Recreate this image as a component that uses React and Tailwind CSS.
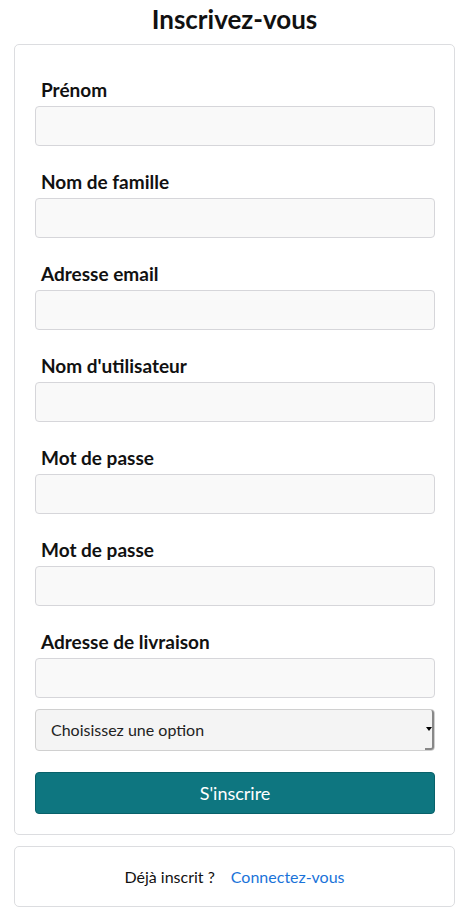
const champs = [
  'Prénom',
  'Nom de famille',
  'Adresse email',
  "Nom d'utilisateur",
  'Mot de passe',
  'Mot de passe',
  'Adresse de livraison',
];

function Champ({ label }) {
  return (
    <div className="mt-6 first:mt-3">
      <label className="block pl-[6px] mb-1 text-[19px] leading-6 font-bold text-[#111]">{label}</label>
      <input className="block w-full h-10 bg-[#f9f9f9] border border-[#d6d6da] rounded-[4px] outline-none" />
    </div>
  );
}

export default function App() {
  return (
    <div className="min-h-screen bg-white font-['Lato',sans-serif] px-[14px]">
      <h1 className="text-center text-[26px] font-bold leading-9 text-[#111] h-11 flex items-center justify-center pb-[6px]">Inscrivez-vous</h1>
      <div className="border border-[#dcdde0] rounded-[5px] pl-5 pr-[19px] pt-[21px] pb-5">
        {champs.map((c, i) => (
          <Champ key={i} label={c} />
        ))}
        <div className="mt-[11px] h-[42px] bg-[#f4f4f4] border border-[#d0d0d0] rounded-[4px] flex items-center relative">
          <span className="pl-[15px] text-[16px] text-[#222]">Choisissez une option</span>
          <div className="absolute right-0 top-0 bottom-0 w-[9px] border-r-2 border-b-2 border-[#888] rounded-r-[3px] flex items-center justify-center">
            <div className="w-0 h-0 border-l-[3px] border-r-[3px] border-t-[4px] border-l-transparent border-r-transparent border-t-black" />
          </div>
        </div>
        <button className="mt-[21px] w-full h-[42px] bg-[#0e7680] border border-[#08616a] rounded-[4px] text-white text-[18px]">S'inscrire</button>
      </div>
      <div className="mt-[11px] border border-[#dcdde0] rounded-[5px] h-[61px] flex items-center justify-center text-[16px]">
        <span className="text-[#111]">Déjà inscrit ?</span>
        <a className="ml-[16px] text-[#1a73d9]" href="#">Connectez-vous</a>
      </div>
    </div>
  );
}
